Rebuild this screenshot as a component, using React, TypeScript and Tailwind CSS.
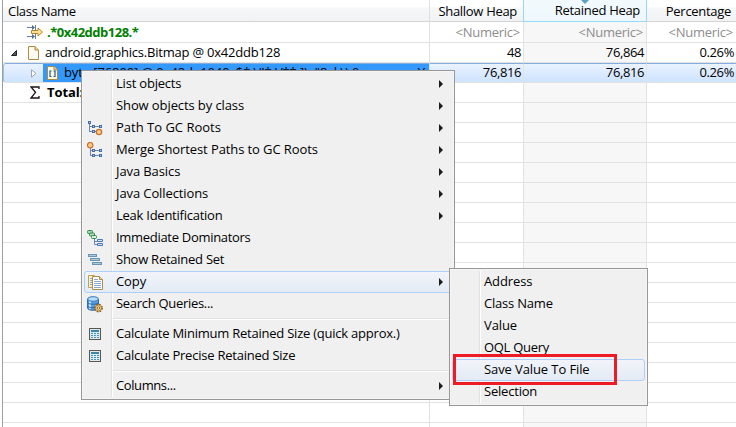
import type { ReactNode } from "react";

const PathIcon = () => (
  <svg width="16" height="16" viewBox="0 0 16 16" fill="none" shapeRendering="crispEdges">
    <path d="M2.5 3v8.500h3M2.500 6.500h3M8 6.500h4M8 11.500h2" stroke="#6d86b4" />
    <path d="M1.500 1.500h2v2h-2zM5.500 5.500h2v2h-2zM12.500 5.500h2v2h-2zM5.500 10.500h2v2h-2z" fill="#a9c3ea" stroke="#4a6da8" />
    <circle cx="12" cy="12" r="2.700" fill="#fcc98a" stroke="#c9702a" strokeWidth="1.200" shapeRendering="auto" />
  </svg>
);
const MergeIcon = () => (
  <svg width="16" height="16" viewBox="0 0 16 16" fill="none" shapeRendering="crispEdges">
    <path d="M3.500 5v8.500h3M3.500 8.500h3M8 8.500h4M8 13.500h4" stroke="#6d86b4" />
    <path d="M5.500 7.500h2v2h-2zM12.500 7.500h2v2h-2zM5.500 12.500h2v2h-2zM12.500 12.500h2v2h-2z" fill="#a9c3ea" stroke="#4a6da8" />
    <circle cx="3.200" cy="3.200" r="2.700" fill="#fcc98a" stroke="#c9702a" strokeWidth="1.200" shapeRendering="auto" />
  </svg>
);
const DominatorsIcon = () => (
  <svg width="16" height="16" viewBox="0 0 16 16" fill="none">
    <rect x=".5" y=".5" width="5" height="3" rx="1" fill="#a5d3ac" stroke="#2f8a4c" />
    <rect x="2.500" y="3" width="5" height="3" rx="1" fill="#b9e0c0" stroke="#2f8a4c" />
    <rect x="4.500" y="5.500" width="5" height="3" rx="1" fill="#d5efd8" stroke="#2f8a4c" />
    <path d="M7.500 9v5.500h3M7.500 11.500h3" stroke="#6d86b4" />
    <path d="M10.500 9.500h5v2h-5zM10.500 13.500h5v2h-5z" fill="#cfe3fa" stroke="#4a78b8" />
  </svg>
);
const RetainedIcon = () => (
  <svg width="16" height="16" viewBox="0 0 16 16" fill="#a9cbdc" stroke="#6a94b2" shapeRendering="crispEdges">
    <path d="M1.500 2.500h8v2h-8zM3.500 6.500h9v2h-9zM5.500 10.500h9v2h-9z" />
  </svg>
);
const CopyIcon = () => (
  <svg width="17" height="16" viewBox="0 0 17 16" fill="none">
    <path d="M1.500 1.500h6l2 2v10h-8z" fill="#fdf4d5" stroke="#c3a14e" />
    <path d="M3 4.500h3M3 6.500h3M3 8.500h3M3 10.500h3" stroke="#8aa5cf" />
    <path d="M5.500 2.500h7l3 3v10h-10z" fill="#fffefa" stroke="#a98d4c" />
    <path d="M12.500 2.500v3h3" fill="#e9d7a3" stroke="#a98d4c" />
    <path d="M7 5.500h4M7 7.500h7M7 9.500h7M7 11.500h7M7 13.500h7" stroke="#8ea8d4" />
  </svg>
);
const SearchIcon = () => (
  <svg width="16" height="17" viewBox="0 0 16 17" fill="none">
    <path d="M.6 3v9c0 3 10.800 3 10.800 0V3" fill="#5d9fe0" stroke="#2467a8" />
    <path d="M3 5v8" stroke="#c6e4fb" strokeWidth="2" />
    <path d="M.6 6.500c1 2.300 9.800 2.300 10.800 0M.6 10c1 2.300 9.800 2.300 10.800 0" stroke="#2467a8" />
    <ellipse cx="6" cy="3" rx="5.400" ry="2.300" fill="#b9dcf8" stroke="#2f7abf" />
    <circle cx="11.500" cy="12" r="3.500" fill="#fbe6b4" stroke="#8a5a1a" strokeWidth="1.800" strokeDasharray="1.650 1.100" />
    <circle cx="11.500" cy="12" r="2.900" fill="#fbe0a0" stroke="#a8762a" strokeWidth=".8" />
    <circle cx="11.500" cy="12" r="1.200" fill="#fff" stroke="#8a5a1a" strokeWidth=".9" />
  </svg>
);
const CalcIcon = () => (
  <svg width="16" height="16" viewBox="0 0 16 16" shapeRendering="crispEdges">
    <path d="M2.500 2.500h11v11h-11z" fill="#d9ecf3" stroke="#5d564a" />
    <path d="M4 4h8v2H4z" fill="#3f86a5" />
    <path d="M4 7h2v1H4zM7 7h2v1H7zM10 7h2v1h-2zM4 9h2v1H4zM7 9h2v1H7zM10 9h2v1h-2zM4 11h2v1H4zM7 11h2v1H7zM10 11h2v1h-2z" fill="#4d93b0" />
  </svg>
);
const FilterIcon = () => (
  <svg width="17" height="16" viewBox="0 0 17 16" fill="none">
    <path d="M0 3.500h6M0 12.500h6M8.500 1v5M8.500 10v5" stroke="#64809a" />
    <path d="M5 1l3 2.500L5 6zM5 10l3 2.500L5 15z" fill="#526f8b" />
    <path d="M4.500 6.500h6.500v-2.500l4.500 4-4.500 4v-2.500h-6.500z" fill="#ffe49a" stroke="#bd8326" />
  </svg>
);
const FileIcon = ({ array = false }: { array?: boolean }) => (
  <svg width="12" height="14" viewBox="0 0 12 14" fill="none">
    <path d="M.5.500h6.500l3.500 3.500v9.500H.5z" fill={array ? "#fff8df" : "#fdfaf0"} stroke="#aa8c45" />
    <path d="M7 .500v3.500h3.500" fill="#ecd28c" stroke="#aa8c45" />
    {array && <path d="M4.500 5H3v5.500h1.500M6.500 5H8v5.500H6.500" stroke="#1d5a9a" strokeWidth="1.200" />}
  </svg>
);

type Item = { label: string; icon?: ReactNode; arrow?: boolean; active?: boolean; tracking?: string };

const Arrow = () => (
  <svg width="4" height="8" viewBox="0 0 4 8" className="mr-[8px] shrink-0">
    <path d="M0 0l4 4-4 4z" fill="#1b1b1b" />
  </svg>
);

function MenuItem({ label, icon, arrow, active, tracking = "" }: Item) {
  return (
    <div
      className={`flex h-[22px] items-center rounded-[3px] border ${
        active ? "border-[#aecff7] bg-linear-to-b from-[#f1f4f9] to-[#e4ebf5]" : "border-transparent"
      }`}
    >
      <span className="flex w-[31px] shrink-0 pl-[2px]">{icon}</span>
      <span className={`grow pb-[2px] whitespace-pre ${tracking}`}>{label}</span>
      {arrow && <Arrow />}
    </div>
  );
}

const Separator = () => (
  <div className="flex h-2 items-center pl-[29px]">
    <div className="h-[2px] grow border-b border-white bg-[#e0e0e0]" />
  </div>
);

function Menu({ className, children }: { className: string; children: ReactNode }) {
  return (
    <div className={`absolute border border-[#979797] bg-[#f0f0f0] p-[2px] shadow-[inset_0_0_0_1px_#f5f5f5] ${className}`}>
      <div className="absolute inset-y-[2px] left-[29px] w-[2px] border-r border-white bg-[#e2e3e3]" />
      <div className="relative">{children}</div>
    </div>
  );
}

type RowProps = { name?: ReactNode; cells?: string[]; numeric?: boolean; selected?: boolean; tall?: boolean };

function Row({ name, cells = ["", "", ""], numeric, selected, tall }: RowProps) {
  const sel = selected ? "border-t border-t-[#84acdd] bg-linear-to-b from-[#eaf3ff] to-[#cde3ff]" : "";
  const line = "flex shrink-0 items-center border-r border-b border-[#e2e2e2]";
  const tone = numeric ? "text-[#8c8c8c] pr-[3px] tracking-[-0.25px]" : "pr-[2px] pb-[2px] tracking-[-0.4px]";
  return (
    <div className={`flex ${tall ? "h-[21px]" : "h-5"}`}>
      <div className={`${line} w-[427px] overflow-hidden ${sel} ${selected ? "rounded-l-[3px] border-l border-l-[#9cc0ea]" : ""}`}>{name}</div>
      <div className={`${line} ${tone} w-[94px] justify-end ${sel}`}>{cells[0]}</div>
      <div className={`${line} ${tone} w-[123px] justify-end ${selected ? sel : "bg-[#f7f7f7]"}`}>{cells[1]}</div>
      <div className={`flex w-[89px] shrink-0 items-center justify-end border-b border-[#e2e2e2] ${tone} ${sel}`}>{cells[2]}</div>
    </div>
  );
}

export default function App() {
  return (
    <div className="relative h-[427px] w-[736px] overflow-hidden bg-white pl-[2px] font-['Open_Sans','Noto_Sans',sans-serif] text-[13px] leading-[18px] tracking-[-0.1px] text-black">
      <div className="border-l border-[#9a9fa6]">
        <div className="flex h-[22px] items-center border-b border-[#d5d5d5] bg-linear-to-b from-white from-35% via-[#f7f8fa] via-36% to-[#f1f2f4] tracking-[-0.3px]">
          <div className="flex h-full w-[427px] items-center border-r border-[#dedfe1] pl-[5px]">Class Name</div>
          <div className="flex h-full w-[93px] items-center justify-end pr-[6px]">Shallow Heap</div>
          <div className="relative flex h-[22px] w-[124px] items-center justify-end border-x border-b border-[#96d9f9] bg-linear-to-b from-[#f2fafd] to-[#eef8fc] pr-[6px]">
            Retained Heap
            <svg className="absolute top-0 left-[57px]" width="8" height="4" viewBox="0 0 8 4">
              <path d="M0 0h8L4 4z" fill="#5f9fc4" />
            </svg>
          </div>
          <div className="flex w-[89px] items-center justify-end pr-[5px]">Percentage</div>
        </div>
        <Row
          tall
          numeric
          cells={["<Numeric>", "<Numeric>", "<Numeric>"]}
          name={
            <>
              <span className="ml-6 w-5"><FilterIcon /></span>
              <b className="tracking-[-0.5px] text-[#008000]">.*0x42ddb128.*</b>
            </>
          }
        />
        <Row
          cells={["48", "76,864", "0.26%"]}
          name={
            <>
              <svg className="ml-[8px]" width="6" height="6" viewBox="0 0 6 6"><path d="M5.500.5v5h-5z" fill="#555" stroke="#222" /></svg>
              <span className="ml-[11px] w-[17px]"><FileIcon /></span>
              <span className="pb-[2px] tracking-[-0.21px]">android.graphics.Bitmap @ 0x42ddb128</span>
            </>
          }
        />
        <Row
          selected
          cells={["76,816", "76,816", "0.26%"]}
          name={
            <>
              <svg className="ml-[27px] shrink-0" width="6" height="9" viewBox="0 0 6 9"><path d="M.5.8v7.400l4.500-3.700z" fill="#fff" stroke="#a0a4a8" /></svg>
              <span className="ml-[6px] flex h-full grow items-center bg-[#3399ff] pl-[4px] whitespace-pre">
                <span className="w-[17px] shrink-0"><FileIcon array /></span>
                <span className="pb-[2px]">byt</span>
                <span className="-mt-px flex h-[8px] grow self-start overflow-hidden">
                  <span className="w-[153px] shrink-0">e [76800] @ 0x42de1040</span>
                  <span className="w-[79px] shrink-0">$*.V!*.V**.])</span>
                  <span className="w-[103px] shrink-0">{'"8..l.\\).0'}</span>
                  <span>Y</span>
                </span>
              </span>
            </>
          }
        />
        <Row
          name={
            <>
              <svg className="ml-[27px] mr-[7px]" width="10" height="13" viewBox="0 0 10 13"><path d="M9 3V1H1l4.500 5.300L1 12h8v-2" fill="none" stroke="#1c1010" strokeWidth="1.300" /></svg>
              <b className="pb-[2px]">Total:</b>
            </>
          }
        />
        {Array.from({ length: 17 }, (_, i) => <Row key={i} />)}
      </div>

      <Menu className="top-[70px] left-[81px] h-[330px] w-[374px]">
        <MenuItem label="List objects" arrow tracking="tracking-[-0.2px]" />
        <MenuItem label="Show objects by class" arrow />
        <MenuItem label="Path To GC Roots" icon={<PathIcon />} arrow tracking="tracking-normal" />
        <MenuItem label="Merge Shortest Paths to GC Roots" icon={<MergeIcon />} arrow />
        <MenuItem label="Java Basics" arrow />
        <MenuItem label="Java Collections" arrow />
        <MenuItem label="Leak Identification" arrow tracking="tracking-[-0.25px]" />
        <MenuItem label="Immediate Dominators" icon={<DominatorsIcon />} tracking="tracking-[-0.3px]" />
        <MenuItem label="Show Retained Set" icon={<RetainedIcon />} tracking="tracking-[-0.25px]" />
        <MenuItem label="Copy" icon={<CopyIcon />} arrow active />
        <MenuItem label="Search Queries..." icon={<SearchIcon />} tracking="tracking-[-0.3px]" />
        <Separator />
        <MenuItem label="Calculate Minimum Retained Size (quick approx.)" icon={<CalcIcon />} tracking="tracking-[-0.23px]" />
        <MenuItem label="Calculate Precise Retained Size" icon={<CalcIcon />} tracking="tracking-[-0.23px]" />
        <Separator />
        <MenuItem label="Columns..." arrow tracking="tracking-[-0.4px]" />
      </Menu>

      <Menu className="top-[268px] left-[449px] h-[138px] w-[199px]">
        <MenuItem label="Address" />
        <MenuItem label="Class Name" tracking="tracking-[-0.2px]" />
        <MenuItem label="Value" />
        <MenuItem label="OQL Query" tracking="tracking-[-0.3px]" />
        <MenuItem label="Save Value To File" active />
        <MenuItem label="Selection" tracking="tracking-[-0.2px]" />
      </Menu>
      <div className="absolute top-[354px] left-[453px] h-[31px] w-[164px] border-[3px] border-[#ed1c24]" />
    </div>
  );
}
